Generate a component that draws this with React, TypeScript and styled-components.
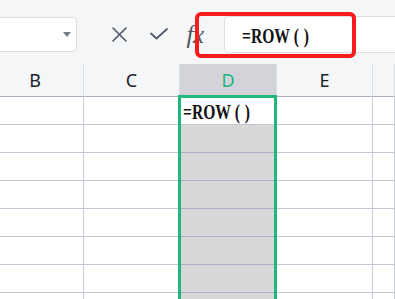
import React from "react";
import styled, { createGlobalStyle } from "styled-components";

const GlobalStyle = createGlobalStyle`
  html, body { margin: 0; padding: 0; background: #ffffff; overflow: hidden; }
  body { font-family: "Noto Sans", "Liberation Sans", sans-serif; }
`;

const Page = styled.div`
  position: relative;
  width: 395px;
  height: 299px;
  overflow: hidden;
  background: #ffffff;
`;

const Toolbar = styled.div`
  position: relative;
  display: flex;
  align-items: center;
  box-sizing: border-box;
  height: 64px;
  padding-top: 4px;
  background: #f5f6f8;
`;

const NameBox = styled.div`
  display: flex;
  align-items: center;
  justify-content: flex-end;
  box-sizing: border-box;
  margin-left: -40px;
  width: 117px;
  height: 35px;
  padding-right: 3px;
  background: #ffffff;
  border: 1px solid #dcdfe5;
  border-radius: 4px;
`;

const DropArrow = styled.span`
  width: 0;
  height: 0;
  margin-right: 2px;
  border-left: 4px solid transparent;
  border-right: 4px solid transparent;
  border-top: 5px solid #747b8b;
`;

const IconSlot = styled.span<{ $ml: number; $w: number }>`
  display: flex;
  align-items: center;
  justify-content: center;
  margin-left: ${(p) => p.$ml}px;
  width: ${(p) => p.$w}px;
  color: #4f5667;
`;

const Fx = styled.span`
  font-family: "Liberation Serif", "DejaVu Serif", serif;
  font-style: italic;
  font-size: 25px;
  line-height: 1;
  color: #4f5566;
  letter-spacing: -0.5px;
`;

const FormulaBox = styled.div`
  display: flex;
  align-items: center;
  box-sizing: border-box;
  flex: 1;
  margin-left: 18px;
  margin-right: -20px;
  height: 37px;
  padding-left: 17px;
  padding-top: 3px;
  background: #ffffff;
  border: 1px solid #dcdfe5;
  border-radius: 4px;
`;

const Formula = styled.span<{ $size: number }>`
  display: inline-block;
  font-family: "Liberation Serif", "DejaVu Serif", serif;
  font-weight: bold;
  font-size: ${(p) => p.$size}px;
  line-height: 1;
  color: #111111;
  white-space: nowrap;
  transform: scaleX(0.78);
  transform-origin: left center;
`;

const Parens = styled.span`
  margin-left: 5px;
  letter-spacing: 6px;
`;

const Highlight = styled.div`
  position: absolute;
  left: 195px;
  top: 12px;
  width: 161px;
  height: 46px;
  box-sizing: border-box;
  border: 4px solid #f81c1a;
  border-radius: 6px;
  pointer-events: none;
`;

const Sheet = styled.div`
  margin-left: -13px;
`;

const columns = "97px 96px 97px 96px 1fr";

const HeaderRow = styled.div`
  display: grid;
  grid-template-columns: ${columns};
  height: 33px;
`;

const HeaderCell = styled.div<{ $selected?: boolean }>`
  display: flex;
  align-items: center;
  justify-content: center;
  box-sizing: border-box;
  border-right: 1px solid #d8dce4;
  border-bottom: 1px solid #a9aebe;
  background: ${(p) => (p.$selected ? "#d2d4da" : "#f5f6f8")};
  color: ${(p) => (p.$selected ? "#22b47c" : "#1d2129")};
  font-size: 18px;
`;

const Row = styled.div`
  display: grid;
  grid-template-columns: ${columns};
  height: 28px;
`;

const Cell = styled.div<{ $shaded?: boolean }>`
  display: flex;
  align-items: center;
  box-sizing: border-box;
  overflow: hidden;
  padding-left: 3px;
  padding-top: 2px;
  border-right: 1px solid ${(p) => (p.$shaded ? "#aab0c1" : "#c9cdd9")};
  border-bottom: 1px solid ${(p) => (p.$shaded ? "#aab0c1" : "#c3c8d6")};
  background: ${(p) => (p.$shaded ? "#d8d8d8" : "#ffffff")};
`;

const Selection = styled.div`
  position: absolute;
  left: 178px;
  top: 95px;
  width: 99px;
  height: 230px;
  box-sizing: border-box;
  border: 3px solid #1fb77b;
  pointer-events: none;
`;

const headers = ["B", "C", "D", "E", ""];
const ROWS = 8;

export default function App() {
  return (
    <Page>
      <GlobalStyle />
      <Toolbar>
        <NameBox>
          <DropArrow />
        </NameBox>
        <IconSlot $ml={35} $w={15}>
          <svg width="15" height="15" viewBox="0 0 15 15" fill="none">
            <path d="M1 1 L14 14 M14 1 L1 14" stroke="currentColor" strokeWidth="1.6" strokeLinecap="round" />
          </svg>
        </IconSlot>
        <IconSlot $ml={23} $w={18}>
          <svg width="18" height="12" viewBox="0 0 18 12" fill="none">
            <path d="M1 5.5 L6.5 10.5 L17 1" stroke="currentColor" strokeWidth="1.7" strokeLinecap="round" strokeLinejoin="round" />
          </svg>
        </IconSlot>
        <IconSlot $ml={16} $w={22}>
          <Fx>fx</Fx>
        </IconSlot>
        <FormulaBox>
          <Formula $size={20}>
            =ROW<Parens>()</Parens>
          </Formula>
        </FormulaBox>
        <Highlight />
      </Toolbar>
      <Sheet>
        <HeaderRow>
          {headers.map((h, i) => (
            <HeaderCell key={i} $selected={h === "D"}>
              {h}
            </HeaderCell>
          ))}
        </HeaderRow>
        {Array.from({ length: ROWS }).map((_, r) => (
          <Row key={r}>
            {headers.map((h, c) => (
              <Cell key={c} $shaded={h === "D" && r > 0}>
                {h === "D" && r === 0 ? (
                  <Formula $size={20}>
                    =ROW<Parens>()</Parens>
                  </Formula>
                ) : null}
              </Cell>
            ))}
          </Row>
        ))}
      </Sheet>
      <Selection />
    </Page>
  );
}
